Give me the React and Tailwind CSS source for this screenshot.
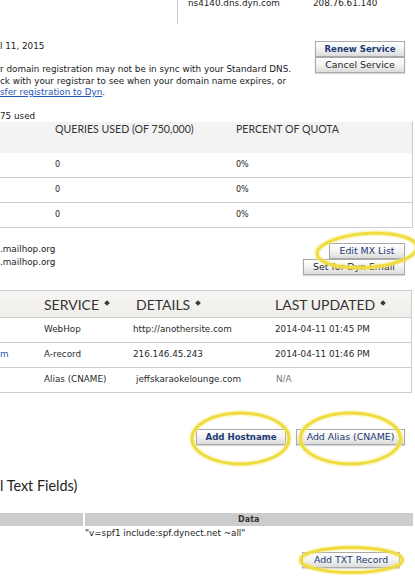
import React from "react";

const body = { fontFamily: '"DejaVu Sans", Verdana, sans-serif' };
const gill = { fontFamily: 'Lato, "Open Sans", sans-serif' };

function Btn({ children, bold, blue, className = "" }) {
  return (
    <div
      className={
        "h-[16px] flex items-center justify-center border border-[#a9a9a9] bg-gradient-to-b from-[#ffffff] via-[#f3f3f3] to-[#dcdcdc] shadow-[0_1px_1px_rgba(0,0,0,0.15)] leading-none whitespace-nowrap " +
        (bold ? "font-bold text-[8.6px] " : "text-[9.4px] ") +
        (blue ? "text-[#1d3b75] " : "text-[#1e1e1e] ") +
        className
      }
    >
      {children}
    </div>
  );
}

function Diamond() {
  return <span className="inline-block w-[4px] h-[4px] bg-[#3a3a3a] rotate-45 ml-[6px] mb-[2px]" />;
}

export default function App() {
  return (
    <div className="relative w-[415px] h-[579px] overflow-hidden bg-white text-[#1a1a1a] text-[8.8px]" style={body}>
      {/* top nameserver row */}
      <div className="h-[24px] flex">
        <div className="w-[177px] shrink-0" />
        <div className="h-[24px] border-l border-[#cccccc] pl-[10px] flex">
          <span className="w-[125px] leading-[11px] -mt-[2px]">ns4140.dns.dyn.com</span>
          <span className="leading-[11px] -mt-[2px]">208.76.61.140</span>
        </div>
      </div>

      {/* expiration */}
      <div className="h-[74px] flex justify-between">
        <div className="pt-[17px] leading-[11.5px]">
          <div>l 11, 2015</div>
          <div className="mt-[11.5px]">
            <div>r domain registration may not be in sync with your Standard DNS.</div>
            <div>ck with your registrar to see when your domain name expires, or</div>
            <div>
              <span className="text-[#1f56b8] underline">sfer registration to Dyn</span>.
            </div>
          </div>
        </div>
        <div className="pt-[17px] pr-[10px] flex flex-col gap-[0px]">
          <Btn bold blue className="w-[90px]">Renew Service</Btn>
          <Btn className="w-[90px]">Cancel Service</Btn>
        </div>
      </div>

      {/* queries table */}
      <div className="leading-[11px] mt-[13px]">75 used</div>
      <div className="w-[413px] border-r border-[#cccccc]">
        <div className="h-[31px] bg-[#f3f3f3] flex text-[10.6px] leading-[14px] text-[#333]" style={gill}>
          <div className="w-[55px]" />
          <div className="w-[181px]">QUERIES USED (OF 750,000)</div>
          <div>PERCENT OF QUOTA</div>
        </div>
        {[0, 1, 2].map((i) => (
          <div key={i} className="h-[25px] border-b border-[#cccccc] flex items-center text-[8px] text-[#222]">
            <div className="w-[55px]" />
            <div className="w-[181px]">0</div>
            <div>0%</div>
          </div>
        ))}
      </div>

      {/* mail */}
      <div className="h-[62px] flex justify-between">
        <div className="pt-[14.5px] leading-[13px]">
          <div>.mailhop.org</div>
          <div>.mailhop.org</div>
        </div>
        <div className="pt-[15px] pr-[10px] flex flex-col items-end">
          <Btn blue className="w-[76px]">Edit MX List</Btn>
          <Btn className="w-[102px]">Set for Dyn Email</Btn>
        </div>
      </div>

      {/* hosts table */}
      <div className="w-[412px] border-t border-r border-[#cccccc]">
        <div className="h-[27px] bg-gradient-to-b from-[#f7f6f4] to-[#efede9] border-b border-[#cccccc] flex items-center text-[14px] text-[#333]" style={gill}>
          <div className="w-[44px]" />
          <div className="w-[92px] flex items-center">SERVICE<Diamond /></div>
          <div className="w-[139px] flex items-center">DETAILS<Diamond /></div>
          <div className="flex items-center">LAST UPDATED<Diamond /></div>
        </div>
        {[
          ["", "WebHop", "http://anothersite.com", "2014-04-11 01:45 PM", false],
          ["m", "A-record", "216.146.45.243", "2014-04-11 01:46 PM", false],
          ["", "Alias (CNAME)", "jeffskaraokelounge.com", "N/A", true],
        ].map(([h, s, d, t, na], i) => (
          <div key={i} className="h-[25px] border-b border-[#cccccc] flex items-center text-[#2a2a2a]">
            <div className="w-[44px] text-[#1f56b8]">{h}</div>
            <div className="w-[89px]">{s}</div>
            <div className={"w-[142px] " + (na ? "pl-[3px]" : "")}>{d}</div>
            <div className={na ? "text-[#777] pl-[1px]" : ""}>{t}</div>
          </div>
        ))}
      </div>

      {/* add buttons */}
      <div className="mt-[36px] pr-[10px] flex justify-end gap-[10px]">
        <Btn bold blue className="w-[90px]">Add Hostname</Btn>
        <Btn blue className="w-[109px]">Add Alias (CNAME)</Btn>
      </div>

      {/* txt section */}
      <div className="mt-[32px] text-[14.4px] leading-[18px] text-[#222]" style={gill}>l Text Fields)</div>
      <div className="mt-[18px] w-[413px]">
        <div className="h-[13px] flex bg-[#cccccc]">
          <div className="w-[83px]" />
          <div className="w-[1.5px] bg-white" />
          <div className="flex-1 text-center font-bold text-[8px] leading-[13px] text-[#333]">Data</div>
        </div>
        <div className="h-[16px] flex items-center">
          <div className="w-[85px]" />
          <div className="text-[#222]">"v=spf1 include:spf.dynect.net ~all"</div>
        </div>
      </div>
      <div className="mt-[10px] pr-[15px] flex justify-end">
        <Btn blue className="w-[98px]">Add TXT Record</Btn>
      </div>

      {/* yellow highlight ellipses */}
      <svg className="absolute inset-0 pointer-events-none" width="415" height="579" viewBox="0 0 415 579">
        <g fill="none" stroke="#f6ec8a" strokeWidth="6" opacity="0.45">
          <ellipse cx="367" cy="250.5" rx="50" ry="17" transform="rotate(-4 367 250.5)" />
          <ellipse cx="240.5" cy="438.5" rx="48.5" ry="25.5" />
          <ellipse cx="350.5" cy="438.5" rx="50" ry="25.5" />
          <ellipse cx="351.5" cy="560" rx="51" ry="12.5" />
        </g>
        <g fill="none" stroke="#efdc3c" strokeWidth="3">
          <ellipse cx="367" cy="250.5" rx="50" ry="17" transform="rotate(-4 367 250.5)" />
          <ellipse cx="240.5" cy="438.5" rx="48.5" ry="25.5" />
          <ellipse cx="350.5" cy="438.5" rx="50" ry="25.5" />
          <ellipse cx="351.5" cy="560" rx="51" ry="12.5" />
        </g>
      </svg>
    </div>
  );
}
